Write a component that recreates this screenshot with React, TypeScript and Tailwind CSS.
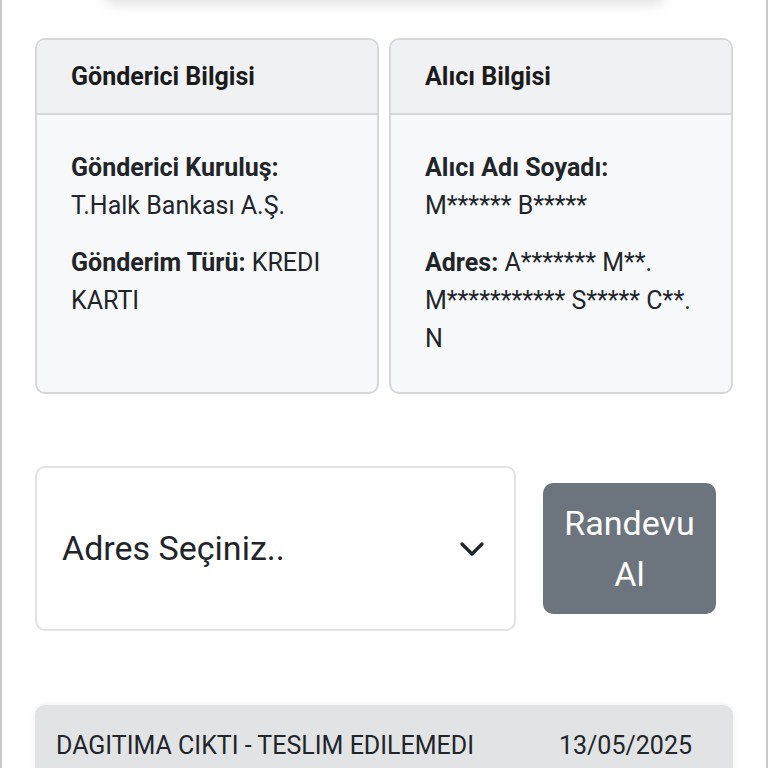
import { ChevronDown } from "lucide-react";

function InfoCard({
  title,
  children,
}: {
  title: string;
  children: React.ReactNode;
}) {
  return (
    <div className="flex flex-col overflow-hidden rounded-[10px] border-2 border-[#d6d7d9] bg-[#f7f8fa]">
      <div className="flex h-[75px] items-center border-b-2 border-[#d6d7d9] bg-[#f0f1f3] px-[34px]">
        <h3 className="text-[25px] font-bold text-[#1b1b1b]">{title}</h3>
      </div>
      <div className="flex flex-col gap-[19px] px-[34px] pt-[34px] pb-[34px] text-[25px] leading-[38px] text-[#212529]">
        {children}
      </div>
    </div>
  );
}

export default function App() {
  return (
    <div
      className="h-[768px] overflow-hidden border-x-2 border-[#c8c8c8] bg-white"
      style={{ fontFamily: "Roboto, 'Liberation Sans', sans-serif" }}
    >
      <div className="mx-[100px] -mt-[20px] h-[20px] rounded-b-xl bg-white shadow-[0_4px_14px_rgba(0,0,0,0.12)]" />

      <div className="mt-[38px] grid grid-cols-2 gap-[10px] px-[33px]">
        <InfoCard title="Gönderici Bilgisi">
          <p>
            <span className="font-bold">Gönderici Kuruluş:</span>
            <br />
            T.Halk Bankası A.Ş.
          </p>
          <p>
            <span className="font-bold">Gönderim Türü:</span> KREDI KARTI
          </p>
        </InfoCard>
        <InfoCard title="Alıcı Bilgisi">
          <p>
            <span className="font-bold">Alıcı Adı Soyadı:</span>
            <br />
            M****** B*****
          </p>
          <p>
            <span className="font-bold">Adres:</span> A******* M**. M***********
            S***** C**. N
          </p>
        </InfoCard>
      </div>

      <div className="mt-[72px] flex items-center gap-[27px] pl-[33px] pr-[50px]">
        <div className="flex h-[165px] w-[481px] items-center justify-between rounded-[10px] border-2 border-[#e2e2e2] bg-white pl-[25px] pr-[22px]">
          <span className="text-[34px] text-[#212529]">Adres Seçiniz..</span>
          <ChevronDown className="h-[40px] w-[40px] text-[#212529]" strokeWidth={2} />
        </div>
        <button className="h-[131px] flex-1 rounded-[10px] bg-[#6c757d] px-4 text-[34px] leading-[51px] text-white">
          Randevu
          <br />
          Al
        </button>
      </div>

      <div className="mx-[33px] mt-[74px] flex h-[90px] items-start justify-between rounded-t-[10px] bg-[#e2e3e5] px-[21px] pt-[22px] text-[25px] text-[#212529] shadow-[0_0_6px_rgba(0,0,0,0.08)]">
        <span>DAGITIMA CIKTI - TESLIM EDILEMEDI</span>
        <span className="pr-[20px]">13/05/2025</span>
      </div>
    </div>
  );
}
